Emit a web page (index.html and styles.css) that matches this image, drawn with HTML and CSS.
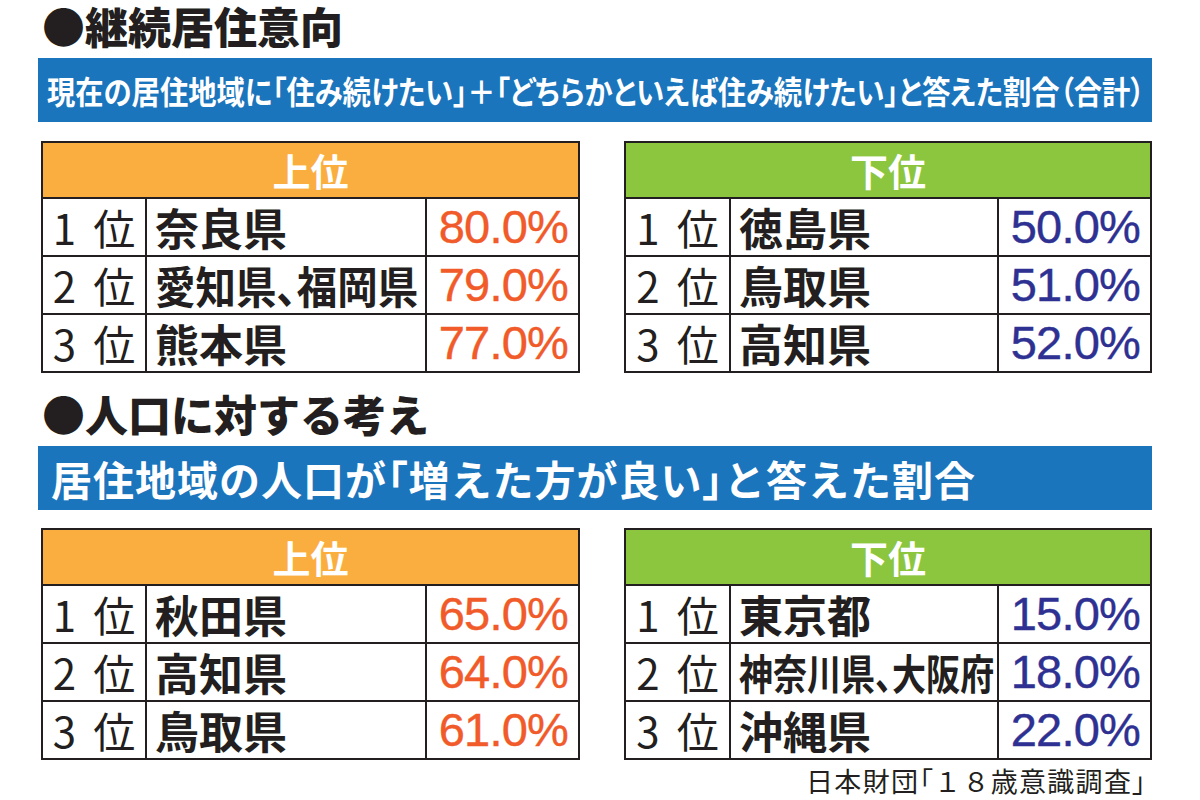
FILE: index.html
```html
<!DOCTYPE html>
<html lang="ja">
<head>
<meta charset="utf-8">
<title>継続居住意向・人口に対する考え</title>
<link rel="stylesheet" href="styles.css">
</head>
<body>
<div class="page">
  <section class="block">
    <h2 class="title">●継続居住意向</h2>
    <div class="bar bar-small"><span class="bar-text fit-small">現在の居住地域に「住み続けたい」＋「どちらかといえば住み続けたい」と答えた割合（合計）</span></div>
    <div class="tables">
      <div class="tbl tbl-left">
        <div class="head head-orange">上位</div>
        <div class="cell rank"><span class="num">1</span>位</div><div class="cell name">奈良県</div><div class="cell val val-orange">80.0%</div>
        <div class="cell rank"><span class="num">2</span>位</div><div class="cell name"><span class="squeeze sq-a">愛知県、福岡県</span></div><div class="cell val val-orange">79.0%</div>
        <div class="cell rank"><span class="num">3</span>位</div><div class="cell name">熊本県</div><div class="cell val val-orange">77.0%</div>
      </div>
      <div class="tbl tbl-right">
        <div class="head head-green">下位</div>
        <div class="cell rank"><span class="num">1</span>位</div><div class="cell name">徳島県</div><div class="cell val val-blue">50.0%</div>
        <div class="cell rank"><span class="num">2</span>位</div><div class="cell name">鳥取県</div><div class="cell val val-blue">51.0%</div>
        <div class="cell rank"><span class="num">3</span>位</div><div class="cell name">高知県</div><div class="cell val val-blue">52.0%</div>
      </div>
    </div>
  </section>

  <section class="block block-second">
    <h2 class="title">●人口に対する考え</h2>
    <div class="bar bar-large"><span class="bar-text fit-large">居住地域の人口が<span class="tight">「</span>増えた方が良い<span class="tight">」</span>と答えた割合</span></div>
    <div class="tables tables-second">
      <div class="tbl tbl-left">
        <div class="head head-orange">上位</div>
        <div class="cell rank"><span class="num">1</span>位</div><div class="cell name">秋田県</div><div class="cell val val-orange">65.0%</div>
        <div class="cell rank"><span class="num">2</span>位</div><div class="cell name">高知県</div><div class="cell val val-orange">64.0%</div>
        <div class="cell rank"><span class="num">3</span>位</div><div class="cell name">鳥取県</div><div class="cell val val-orange">61.0%</div>
      </div>
      <div class="tbl tbl-right">
        <div class="head head-green">下位</div>
        <div class="cell rank"><span class="num">1</span>位</div><div class="cell name">東京都</div><div class="cell val val-blue">15.0%</div>
        <div class="cell rank"><span class="num">2</span>位</div><div class="cell name"><span class="squeeze sq-b">神奈川県、大阪府</span></div><div class="cell val val-blue">18.0%</div>
        <div class="cell rank"><span class="num">3</span>位</div><div class="cell name">沖縄県</div><div class="cell val val-blue">22.0%</div>
      </div>
    </div>
  </section>

  <p class="source">日本財団<span class="tight">「</span>１８歳意識調査<span class="tight">」</span></p>
</div>
</body>
</html>
```

FILE: styles.css
```css
* { box-sizing: border-box; }

html, body {
  margin: 0;
  padding: 0;
  background: #ffffff;
}

body {
  font-family: "Noto Sans CJK JP", "Noto Sans", sans-serif;
  color: #231f20;
}

.page {
  padding-left: 38px;
  width: 1152px;
}

.title {
  margin: 0;
  height: 58px;
  padding-left: 4px;
  font-size: 43px;
  line-height: 50px;
  font-weight: 900;
  white-space: nowrap;
}

.bar {
  height: 64px;
  background: #1b75bc;
  color: #ffffff;
  display: flex;
  align-items: center;
  white-space: nowrap;
}

.bar-small {
  padding-left: 9px;
  font-size: 32px;
  line-height: 40px;
  font-weight: 700;
}

.bar-large {
  padding-left: 13px;
  font-size: 41px;
  line-height: 48px;
  font-weight: 700;
}

.bar-text {
  display: inline-block;
}

.fit-small {
  font-feature-settings: "palt" 1;
  transform: scaleX(0.885);
  transform-origin: left center;
}

.fit-large {
  letter-spacing: 1px;
}

.tight {
  font-feature-settings: "palt" 1;
}

.tables {
  display: flex;
  justify-content: space-between;
  margin-top: 19px;
}

.tables-second {
  margin-top: 18px;
}

.block-second {
  margin-top: 15px;
}

.tbl {
  display: grid;
  grid-template-rows: 54px repeat(3, 56px);
  gap: 2px;
  border: 2px solid #231f20;
  background: #231f20;
}

.tbl-left {
  width: 539px;
  margin-left: 3px;
  grid-template-columns: 102px 278px 151px;
}

.tbl-right {
  width: 528px;
  grid-template-columns: 103px 266px 151px;
}

.head {
  grid-column: 1 / -1;
  display: flex;
  align-items: center;
  justify-content: center;
  color: #ffffff;
  font-size: 38px;
  line-height: 46px;
  font-weight: 700;
}

.head-orange { background: #fbae40; }
.head-green { background: #8cc63f; }

.cell {
  background: #ffffff;
  display: flex;
  align-items: center;
  white-space: nowrap;
  line-height: 52px;
}

.rank {
  justify-content: center;
  font-size: 42px;
  font-weight: 400;
}

.num {
  margin-right: 17px;
}

.name {
  padding-left: 8px;
  font-size: 44px;
  font-weight: 700;
}

.squeeze {
  display: inline-block;
  font-feature-settings: "palt" 1;
  transform-origin: left center;
}

.sq-a {
  transform: scaleX(0.92);
}

.sq-b {
  font-size: 42px;
  transform: scaleX(0.81);
}

.val {
  justify-content: flex-end;
  padding-right: 10px;
  font-family: "Liberation Sans", Arial, sans-serif;
  font-size: 47px;
  letter-spacing: -0.8px;
  -webkit-text-stroke: 0.4px currentColor;
}

.val-orange { color: #f15a29; }
.val-blue { color: #2e3192; }

.source {
  margin: 1px 0 0 0;
  padding-right: 5px;
  text-align: right;
  font-size: 27px;
  line-height: 39px;
  letter-spacing: 1.3px;
  white-space: nowrap;
}
```
